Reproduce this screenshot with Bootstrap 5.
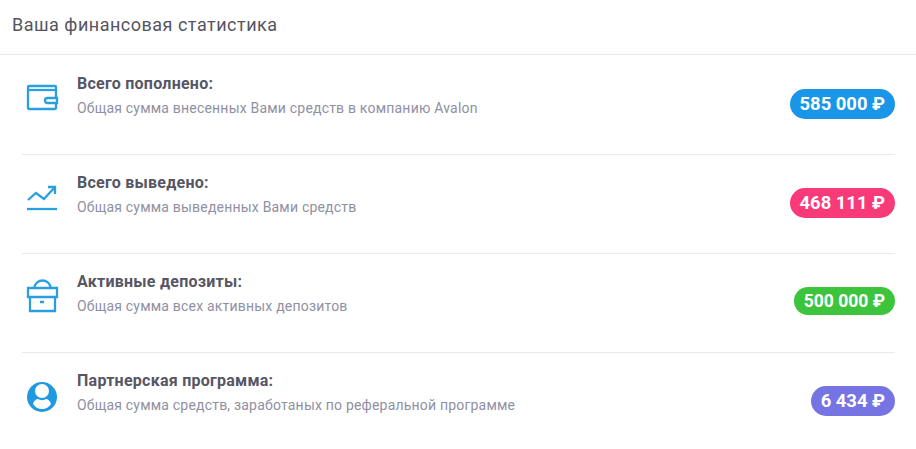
<!DOCTYPE html>
<html lang="ru">
<head>
    <meta charset="UTF-8">
    <meta name="viewport" content="width=device-width, initial-scale=1.0">
    <title>Ваша финансовая статистика</title>
    <link href="https://cdn.jsdelivr.net/npm/bootstrap@5.3.0/dist/css/bootstrap.min.css" rel="stylesheet">
    <style>
        body {
            font-family: Roboto, "Liberation Sans", sans-serif;
            background: #fff;
            overflow: hidden;
        }
        .stat-head {
            height: 55px;
            padding: 14px 12px 0;
            border-bottom: 1px solid #e9e9e9;
            font-size: 18px;
            line-height: 22px;
            letter-spacing: .5px;
            color: #55555f;
        }
        .stat-list {
            padding: 1px 21px 0 22px;
        }
        .stat-row {
            height: 99px;
            border-bottom: 1px solid #e9e9e9;
        }
        .stat-row:last-child {
            border-bottom: 0;
        }
        .stat-icon {
            width: 55px;
            flex: none;
            padding-top: 24px;
            color: #2a9fe0;
        }
        .stat-icon svg {
            display: block;
        }
        .stat-text {
            padding-top: 18px;
        }
        .stat-title {
            font-size: 16px;
            font-weight: 700;
            letter-spacing: .25px;
            line-height: 20px;
            color: #565664;
        }
        .stat-sub {
            margin-top: 4px;
            font-size: 14px;
            letter-spacing: .2px;
            line-height: 20px;
            color: #8f90a3;
        }
        .stat-sum {
            margin-top: 33px;
            height: 30px;
            padding: 0 10px;
            border-radius: 15px;
            font-size: 18.4px;
            font-weight: 700;
            line-height: 30px;
            color: #fff;
            white-space: nowrap;
        }
        .stat-sum.small-pill {
            height: 28px;
            font-size: 17.5px;
            line-height: 28px;
            border-radius: 14px;
        }
        .sum-blue { background: #1a96e8; }
        .sum-pink { background: #f93a78; }
        .sum-green { background: #3cc43c; }
        .sum-violet { background: #7674e2; }
    </style>
</head>
<body>

    <div class="stat-head">Ваша финансовая статистика</div>

    <div class="stat-list">
        <div class="stat-row d-flex align-items-start">
            <div class="stat-icon">
                <svg width="40" height="36" viewBox="0 0 40 36" fill="none" stroke="currentColor" stroke-width="2.300">
                    <rect x="6" y="6" width="28" height="23" rx="1"/>
                    <path d="M6 10H34"/>
                    <path d="M35 18H25.500A2.500 2.500 0 0 0 25.500 23H35Z" fill="#fff"/>
                </svg>
            </div>
            <div class="stat-text flex-grow-1">
                <div class="stat-title">Всего пополнено:</div>
                <div class="stat-sub">Общая сумма внесенных Вами средств в компанию Avalon</div>
            </div>
            <div class="stat-sum sum-blue">585 000 ₽</div>
        </div>
        <div class="stat-row d-flex align-items-start">
            <div class="stat-icon">
                <svg width="40" height="36" viewBox="0 0 40 36" fill="none" stroke="currentColor" stroke-width="2.300">
                    <path d="M6 21L14 14L22 20L33 8M26 8H33V15"/>
                    <path d="M5 30H35"/>
                </svg>
            </div>
            <div class="stat-text flex-grow-1">
                <div class="stat-title">Всего выведено:</div>
                <div class="stat-sub">Общая сумма выведенных Вами средств</div>
            </div>
            <div class="stat-sum sum-pink">468 111 ₽</div>
        </div>
        <div class="stat-row d-flex align-items-start">
            <div class="stat-icon">
                <svg width="40" height="36" viewBox="0 0 40 36" fill="none" stroke="currentColor" stroke-width="2.300">
                    <path d="M6 10H35V19H6ZM8 19V33H33V19"/>
                    <path d="M12 10C14 0 27 0 29 10M18 24H22"/>
                </svg>
            </div>
            <div class="stat-text flex-grow-1">
                <div class="stat-title">Активные депозиты:</div>
                <div class="stat-sub">Общая сумма всех активных депозитов</div>
            </div>
            <div class="stat-sum sum-green small-pill">500 000 ₽</div>
        </div>
        <div class="stat-row d-flex align-items-start">
            <div class="stat-icon">
                <svg width="40" height="36" viewBox="0 0 40 36" fill="#1f9ae0">
                    <circle cx="20" cy="20" r="15"/>
                    <circle cx="20" cy="14" r="7" fill="#fff"/>
                    <path d="M11 27C12 23 15 22 16 22C18 23.500 22 23.500 24 22C25 22 28 23 29 27C27 30 24 32 20 32C16 32 13 30 11 27Z" fill="#fff"/>
                </svg>
            </div>
            <div class="stat-text flex-grow-1">
                <div class="stat-title">Партнерская программа:</div>
                <div class="stat-sub">Общая сумма средств, заработаных по реферальной программе</div>
            </div>
            <div class="stat-sum sum-violet">6 434 ₽</div>
        </div>
    </div>

    <script src="https://cdn.jsdelivr.net/npm/bootstrap@5.3.0/dist/js/bootstrap.bundle.min.js"></script>
</body>
</html>
